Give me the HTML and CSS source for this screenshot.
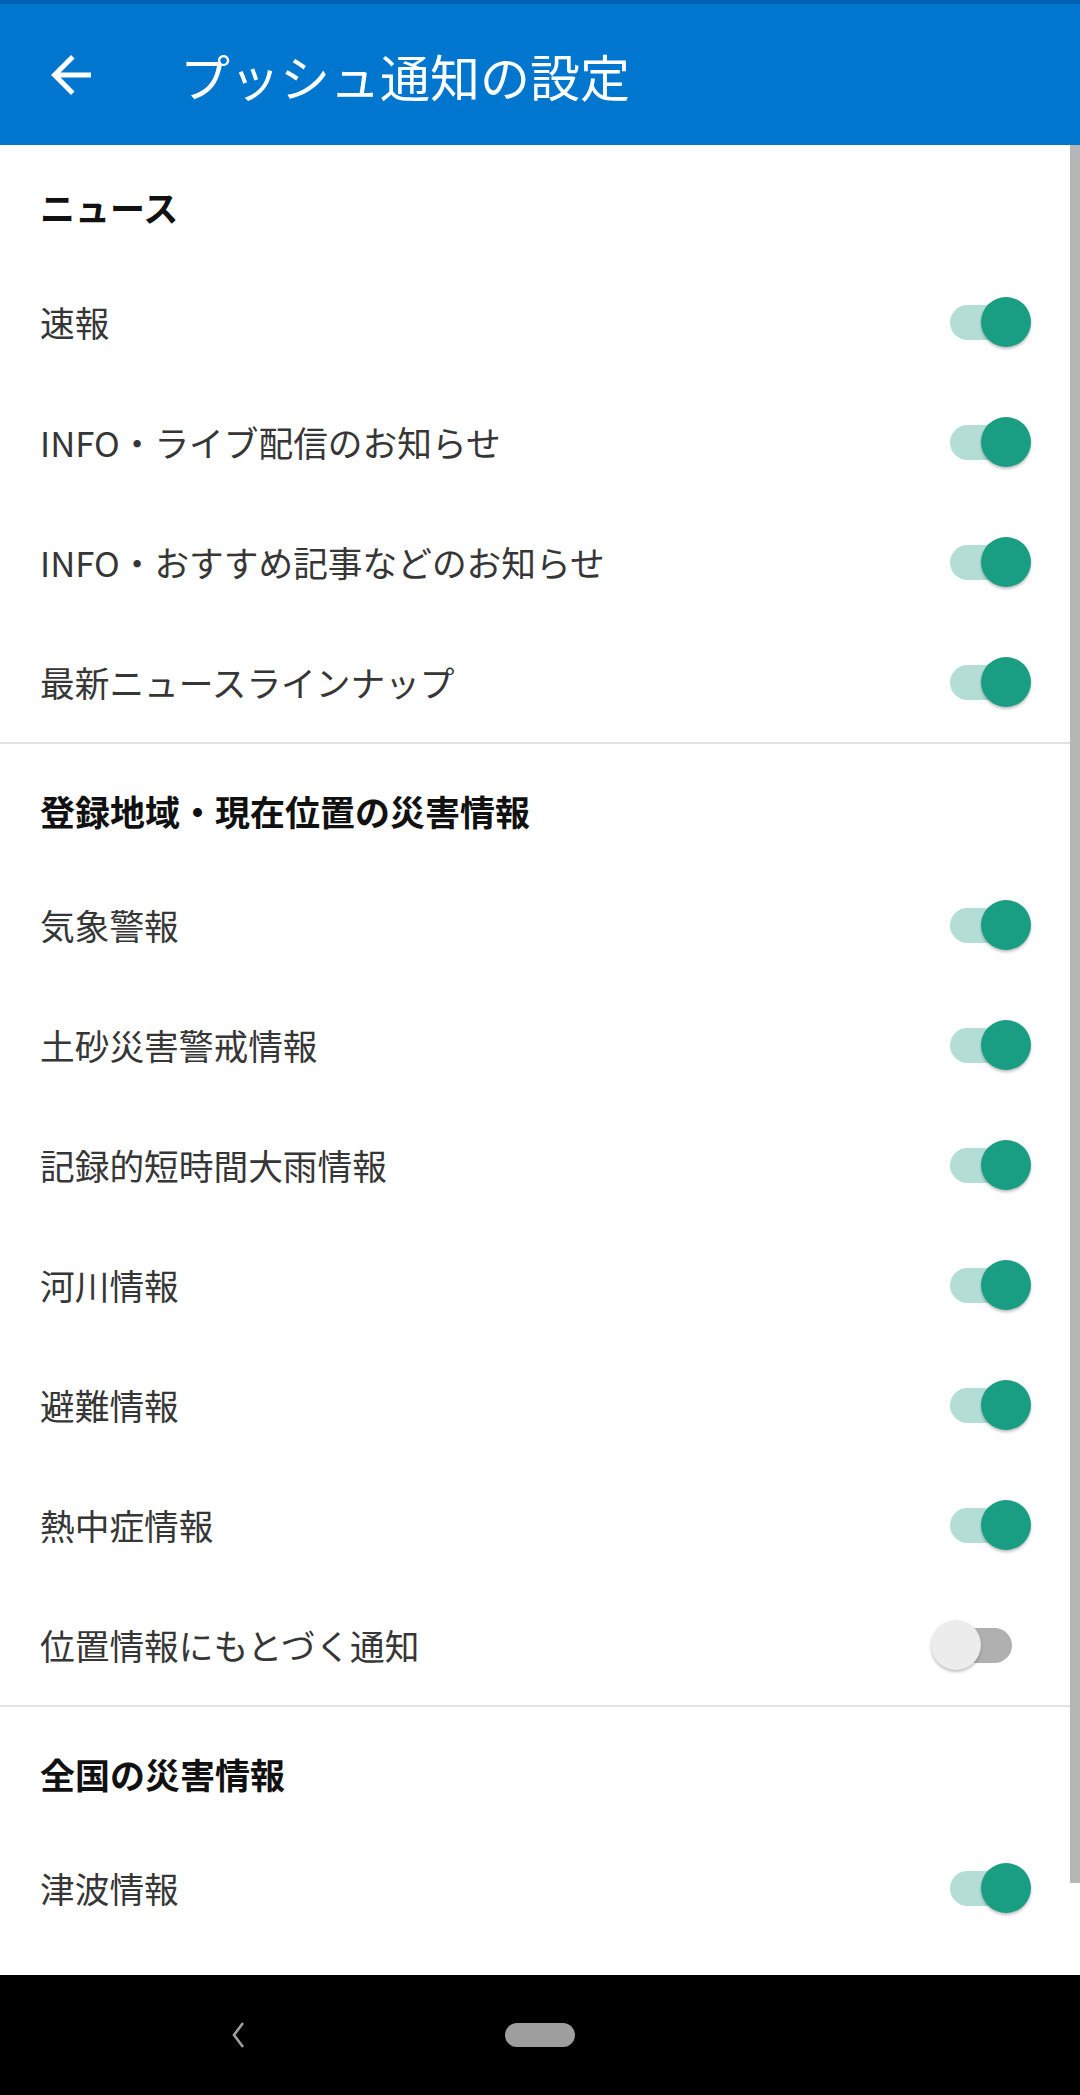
FILE: index.html
```html
<!DOCTYPE html>
<html lang="ja">
<head>
    <meta charset="UTF-8">
    <meta name="viewport" content="width=device-width, initial-scale=1.0">
    <title>プッシュ通知の設定</title>
    <link rel="stylesheet" href="styles.css">
</head>
<body>

<div class="screen">
    <div class="status-strip"></div>
    <div class="toolbar">
        <svg class="back-icon" viewBox="0 0 24 24" width="60" height="60">
            <path d="M20 11H7.83l5.59-5.59L12 4l-8 8 8 8 1.41-1.41L7.83 13H20v-2z" fill="#ffffff"/>
        </svg>
        <h1 class="toolbar-title">プッシュ通知の設定</h1>
    </div>

    <div class="content">
        <div class="section first">
            <div class="section-title">ニュース</div>
            <div class="row"><span class="label">速報</span><span class="switch on"><span class="track"></span><span class="thumb"></span></span></div>
            <div class="row"><span class="label">INFO・ライブ配信のお知らせ</span><span class="switch on"><span class="track"></span><span class="thumb"></span></span></div>
            <div class="row"><span class="label">INFO・おすすめ記事などのお知らせ</span><span class="switch on"><span class="track"></span><span class="thumb"></span></span></div>
            <div class="row"><span class="label">最新ニュースラインナップ</span><span class="switch on"><span class="track"></span><span class="thumb"></span></span></div>
        </div>

        <div class="section">
            <div class="section-title">登録地域・現在位置の災害情報</div>
            <div class="row"><span class="label">気象警報</span><span class="switch on"><span class="track"></span><span class="thumb"></span></span></div>
            <div class="row"><span class="label">土砂災害警戒情報</span><span class="switch on"><span class="track"></span><span class="thumb"></span></span></div>
            <div class="row"><span class="label">記録的短時間大雨情報</span><span class="switch on"><span class="track"></span><span class="thumb"></span></span></div>
            <div class="row"><span class="label">河川情報</span><span class="switch on"><span class="track"></span><span class="thumb"></span></span></div>
            <div class="row"><span class="label">避難情報</span><span class="switch on"><span class="track"></span><span class="thumb"></span></span></div>
            <div class="row"><span class="label">熱中症情報</span><span class="switch on"><span class="track"></span><span class="thumb"></span></span></div>
            <div class="row"><span class="label">位置情報にもとづく通知</span><span class="switch off"><span class="track"></span><span class="thumb"></span></span></div>
        </div>

        <div class="section last">
            <div class="section-title">全国の災害情報</div>
            <div class="row"><span class="label">津波情報</span><span class="switch on"><span class="track"></span><span class="thumb"></span></span></div>
        </div>

        <div class="scrollbar"></div>
    </div>

    <div class="navbar">
        <svg class="nav-back" viewBox="0 0 14 28" width="14" height="28">
            <polyline points="12,2 3,14 12,26" fill="none" stroke="#9e9e9e" stroke-width="2.6"/>
        </svg>
        <div class="nav-pill"></div>
    </div>
</div>

</body>
</html>
```

FILE: styles.css
```css
body {
    margin: 0;
    font-family: "Noto Sans CJK JP", "Noto Sans", sans-serif;
    background-color: #ffffff;
}
.screen {
    width: 1080px;
    height: 2095px;
    display: flex;
    flex-direction: column;
    overflow: hidden;
}
.status-strip {
    height: 4px;
    background-color: #0062b3;
}
.toolbar {
    height: 141px;
    background-color: #0076cf;
    display: flex;
    align-items: center;
}
.back-icon {
    margin-left: 41px;
}
.toolbar-title {
    margin: 0 0 0 79px;
    font-size: 50px;
    font-weight: 400;
    color: #ffffff;
    line-height: 60px;
}
.content {
    flex: 1;
    position: relative;
    overflow: hidden;
}
.section {
    border-bottom: 2px solid #e2e2e2;
}
.section.last {
    border-bottom: none;
}
.section-title {
    padding: 47px 40px 34px;
    font-size: 35px;
    line-height: 40px;
    font-weight: 700;
    color: #111111;
}
.section.first .section-title {
    padding-top: 42px;
    padding-bottom: 35px;
}
.row {
    height: 120px;
    display: flex;
    align-items: center;
    justify-content: space-between;
    padding: 0 49px 0 40px;
}
.label {
    font-size: 34.7px;
    line-height: 40px;
    color: #363636;
}
.switch {
    position: relative;
    width: 100px;
    height: 50px;
}
.track {
    position: absolute;
    left: 19px;
    top: 8px;
    width: 62px;
    height: 35px;
    border-radius: 18px;
}
.thumb {
    position: absolute;
    top: 0;
    width: 50px;
    height: 50px;
    border-radius: 50%;
    box-shadow: 0 2px 3px rgba(0, 0, 0, 0.25);
}
.switch.on .track {
    background-color: #b4ddd6;
}
.switch.on .thumb {
    left: 50px;
    background-color: #1a9e83;
}
.switch.off .track {
    background-color: #b0b0b0;
}
.switch.off .thumb {
    left: 0;
    background-color: #ececec;
}
.scrollbar {
    position: absolute;
    top: 0;
    right: 0;
    width: 10px;
    height: 1738px;
    background-color: #b6b6b6;
}
.navbar {
    height: 120px;
    background-color: #000000;
    display: flex;
    align-items: center;
}
.nav-back {
    margin-left: 231px;
}
.nav-pill {
    margin-left: 260px;
    width: 70px;
    height: 24px;
    border-radius: 12px;
    background-color: #9e9e9e;
}
```
